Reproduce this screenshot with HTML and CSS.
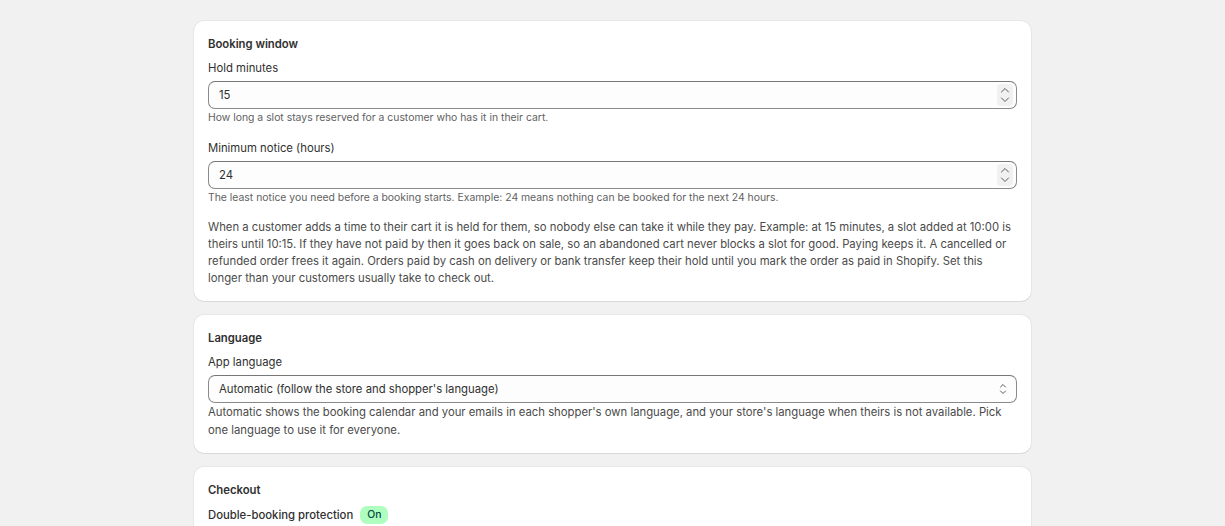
FILE: index.html
```html
<!DOCTYPE html>
<html lang="en">
<head>
    <meta charset="UTF-8">
    <meta name="viewport" content="width=device-width, initial-scale=1.0">
    <title>Settings</title>
    <link rel="stylesheet" href="styles.css">
</head>
<body>
    <div class="page">

        <!-- Booking window -->
        <section class="card">
            <h2 class="card-title">Booking window</h2>

            <div class="field">
                <label class="field-label" for="holdMinutes">Hold minutes</label>
                <div class="input-box">
                    <input class="input" id="holdMinutes" type="text" value="15">
                    <span class="spinner">
                        <svg viewBox="0 0 10 8" width="10" height="8"><path d="M1.5 6 L5 2.5 L8.5 6" /></svg>
                        <svg viewBox="0 0 10 8" width="10" height="8"><path d="M1.5 2 L5 5.5 L8.5 2" /></svg>
                    </span>
                </div>
                <p class="help">How long a slot stays reserved for a customer who has it in their cart.</p>
            </div>

            <div class="field">
                <label class="field-label" for="minNotice">Minimum notice (hours)</label>
                <div class="input-box">
                    <input class="input" id="minNotice" type="text" value="24">
                    <span class="spinner">
                        <svg viewBox="0 0 10 8" width="10" height="8"><path d="M1.5 6 L5 2.5 L8.5 6" /></svg>
                        <svg viewBox="0 0 10 8" width="10" height="8"><path d="M1.5 2 L5 5.5 L8.5 2" /></svg>
                    </span>
                </div>
                <p class="help">The least notice you need before a booking starts. Example: 24 means nothing can be booked for the next 24 hours.</p>
            </div>

            <p class="body-text">When a customer adds a time to their cart it is held for them, so nobody else can take it while they pay. Example: at 15 minutes, a slot added at 10:00 is theirs until 10:15. If they have not paid by then it goes back on sale, so an abandoned cart never blocks a slot for good. Paying keeps it. A cancelled or refunded order frees it again. Orders paid by cash on delivery or bank transfer keep their hold until you mark the order as paid in Shopify. Set this longer than your customers usually take to check out.</p>
        </section>

        <!-- Language -->
        <section class="card">
            <h2 class="card-title">Language</h2>

            <div class="field">
                <label class="field-label" for="appLanguage">App language</label>
                <div class="input-box">
                    <span class="select-value" id="appLanguage">Automatic (follow the store and shopper's language)</span>
                    <span class="select-arrows">
                        <svg viewBox="0 0 10 14" width="10" height="14"><path d="M2.5 5 L5 2.5 L7.5 5 M2.5 9 L5 11.5 L7.5 9" /></svg>
                    </span>
                </div>
                <p class="help help-lg">Automatic shows the booking calendar and your emails in each shopper's own language, and your store's language when theirs is not available. Pick one language to use it for everyone.</p>
            </div>
        </section>

        <!-- Checkout -->
        <section class="card">
            <h2 class="card-title">Checkout</h2>
            <div class="status-row">
                <span class="status-label">Double-booking protection</span>
                <span class="badge badge-success">On</span>
            </div>
        </section>

    </div>
</body>
</html>
```

FILE: styles.css
```css
/* admin settings page */
body {
    margin: 0;
    background: #f1f1f1;
    font-family: Inter, "Noto Sans", Arial, sans-serif;
    color: #303030;
    font-size: 11.3px;
}
.page {
    width: 837px;
    margin: 0 auto;
    padding-top: 21px;
    display: flex;
    flex-direction: column;
    gap: 14px;
}
.card {
    background: #fff;
    border-radius: 10px;
    padding: 15px 14px 14px;
    box-shadow: 0 1px 0 rgba(26, 26, 26, 0.07), 0 0 0 1px rgba(0, 0, 0, 0.04);
}
.card-title {
    margin: 0 0 8px;
    font-size: 11.3px;
    font-weight: 600;
    line-height: 16px;
}
.field + .field {
    margin-top: 14px;
}
.field-label {
    display: block;
    line-height: 16px;
    margin-bottom: 5px;
}
.input-box {
    display: flex;
    align-items: center;
    height: 28px;
    box-sizing: border-box;
    border: 1px solid #8a8a8a;
    border-top-color: #777;
    border-radius: 7px;
    background: #fdfdfd;
    padding: 0 3px 0 10px;
}
.input {
    flex: 1;
    border: none;
    outline: none;
    background: transparent;
    font: inherit;
    color: #303030;
    padding: 0;
}
.spinner {
    display: flex;
    flex-direction: column;
    align-items: center;
    justify-content: center;
    gap: 2px;
    width: 16px;
    height: 22px;
    border-radius: 4px;
    background: #f1f1f1;
}
.spinner svg,
.select-arrows svg {
    fill: none;
    stroke: #5a5a5a;
    stroke-width: 1;
    stroke-linecap: round;
    stroke-linejoin: round;
}
.select-value {
    flex: 1;
}
.select-arrows {
    display: flex;
    width: 20px;
    justify-content: center;
}
.help {
    margin: 1px 0 0;
    font-size: 10.4px;
    line-height: 16px;
    color: #616161;
}
.help-lg {
    font-size: 11.3px;
    line-height: 17.5px;
    color: #4a4a4a;
}
.body-text {
    margin: 13px 0 0;
    line-height: 17px;
    color: #4a4a4a;
}
.status-row {
    display: flex;
    align-items: center;
    gap: 7px;
    line-height: 16px;
}
.status-label {
    font-weight: 500;
}
.badge {
    padding: 1px 7px;
    border-radius: 7px;
    font-size: 10.4px;
    font-weight: 500;
    line-height: 16px;
}
.badge-success {
    background: #affebf;
    color: #014b40;
}
```
